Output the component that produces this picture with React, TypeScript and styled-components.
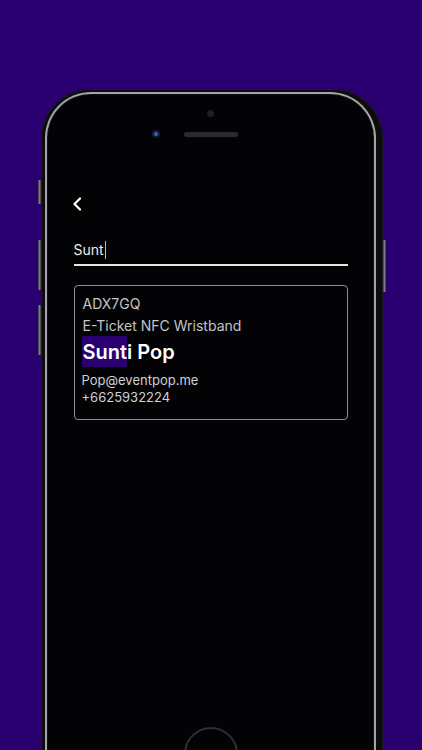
import React from "react";
import styled, { createGlobalStyle } from "styled-components";

const GlobalStyle = createGlobalStyle`
  html, body {
    margin: 0;
    padding: 0;
    background: #2a0071;
  }
  body {
    font-family: Inter, "Noto Sans", "Liberation Sans", sans-serif;
  }
`;

const Page = styled.div`
  width: 422px;
  height: 750px;
  overflow: hidden;
  background: #2a0071;
  display: flex;
  justify-content: center;
  padding-top: 89px;
  box-sizing: border-box;
`;

const Phone = styled.div`
  position: relative;
  width: 342px;
  height: 720px;
  margin-left: 1px;
  flex-shrink: 0;
  box-sizing: border-box;
  padding: 3px 7px 0 4px;
  border-radius: 50px;
  background: #0c0c0f;
  box-shadow: inset 0 0 0 1px #1c1c20;
`;

const SideButton = styled.span<{ $side: "left" | "right"; $top: number; $h: number }>`
  position: absolute;
  ${(p) => (p.$side === "left" ? "left: -3px;" : "right: -3px;")}
  top: ${(p) => p.$top}px;
  width: 3px;
  height: ${(p) => p.$h}px;
  border-radius: 1px;
  background: linear-gradient(90deg, #3a3a40, #7a7a80, #3a3a40);
`;

const Rim = styled.div`
  height: 100%;
  box-sizing: border-box;
  border-radius: 46px;
  border: 2px solid #a4a4a8;
  border-bottom: none;
  background: #030306;
  box-shadow: inset 0 0 0 1px #111114;
  display: flex;
  flex-direction: column;
  padding: 0 26px 0 27px;
`;

const CameraDot = styled.div`
  align-self: center;
  width: 7px;
  height: 7px;
  margin-top: 16px;
  border-radius: 50%;
  background: #1f1f23;
`;

const SensorRow = styled.div`
  display: flex;
  align-items: center;
  justify-content: center;
  gap: 24px;
  margin-top: 13px;
  height: 8px;
`;

const FrontCamera = styled.div`
  width: 8px;
  height: 8px;
  border-radius: 50%;
  background: radial-gradient(circle, #3b5cc9 0 25%, #16183a 45%, #1a1a20 70%);
`;

const Speaker = styled.div`
  width: 54px;
  height: 5px;
  border-radius: 3px;
  background: #2b2b2f;
`;

const Spacer = styled.div`
  width: 8px;
`;

const BackButton = styled.button`
  align-self: flex-start;
  margin: 58px 0 0 -4px;
  padding: 0;
  border: none;
  background: none;
  width: 14px;
  height: 16px;
  display: flex;
  align-items: center;
  justify-content: center;
  color: #ffffff;
`;

const SearchField = styled.div`
  margin-top: 29px;
  display: flex;
  align-items: center;
  padding-bottom: 5px;
  border-bottom: 2px solid #e6e6e6;
  font-size: 14px;
  line-height: 18px;
  color: #ececec;
`;

const Caret = styled.span`
  display: inline-block;
  width: 1px;
  height: 18px;
  margin-left: 1px;
  background: #bdbdbd;
`;

const ResultCard = styled.div`
  margin-top: 19px;
  border: 1px solid #8e8e92;
  border-radius: 4px;
  padding: 9px 7px 13px 7px;
  display: flex;
  flex-direction: column;
`;

const Code = styled.div`
  font-size: 14px;
  line-height: 18px;
  color: #c4c4c6;
  padding-left: 1px;
`;

const TicketType = styled(Code)`
  margin-top: 4px;
`;

const Name = styled.div`
  margin-top: 3px;
  font-size: 20px;
  font-weight: 600;
  line-height: 29px;
  color: #ffffff;
`;

const Highlight = styled.mark`
  background: #2a0071;
  color: #ffffff;
  padding: 4px 0 3px 1px;
`;

const Contact = styled.div`
  font-size: 13px;
  line-height: 17px;
  color: #d0d0d2;
`;

const Email = styled(Contact)`
  margin-top: 5px;
`;

const HomeButton = styled.div`
  align-self: center;
  margin-top: 307px;
  width: 50px;
  height: 50px;
  border-radius: 50%;
  border: 2px solid #2e2e33;
`;

function ChevronLeft() {
  return (
    <svg width="10" height="14" viewBox="0 0 10 14" fill="none">
      <path
        d="M8 1.5 2.5 7 8 12.5"
        stroke="currentColor"
        strokeWidth="2.2"
        strokeLinecap="round"
        strokeLinejoin="round"
      />
    </svg>
  );
}

export default function App() {
  return (
    <>
      <GlobalStyle />
      <Page>
        <Phone>
          <SideButton $side="left" $top={91} $h={24} />
          <SideButton $side="left" $top={151} $h={50} />
          <SideButton $side="left" $top={216} $h={50} />
          <SideButton $side="right" $top={151} $h={52} />
          <Rim>
            <CameraDot />
            <SensorRow>
              <FrontCamera />
              <Speaker />
              <Spacer />
            </SensorRow>

            <BackButton aria-label="Back">
              <ChevronLeft />
            </BackButton>

            <SearchField>
              Sunt
              <Caret />
            </SearchField>

            <ResultCard>
              <Code>ADX7GQ</Code>
              <TicketType>E-Ticket NFC Wristband</TicketType>
              <Name>
                <Highlight>Sunt</Highlight>i Pop
              </Name>
              <Email>Pop@eventpop.me</Email>
              <Contact>+6625932224</Contact>
            </ResultCard>

            <HomeButton />
          </Rim>
        </Phone>
      </Page>
    </>
  );
}
